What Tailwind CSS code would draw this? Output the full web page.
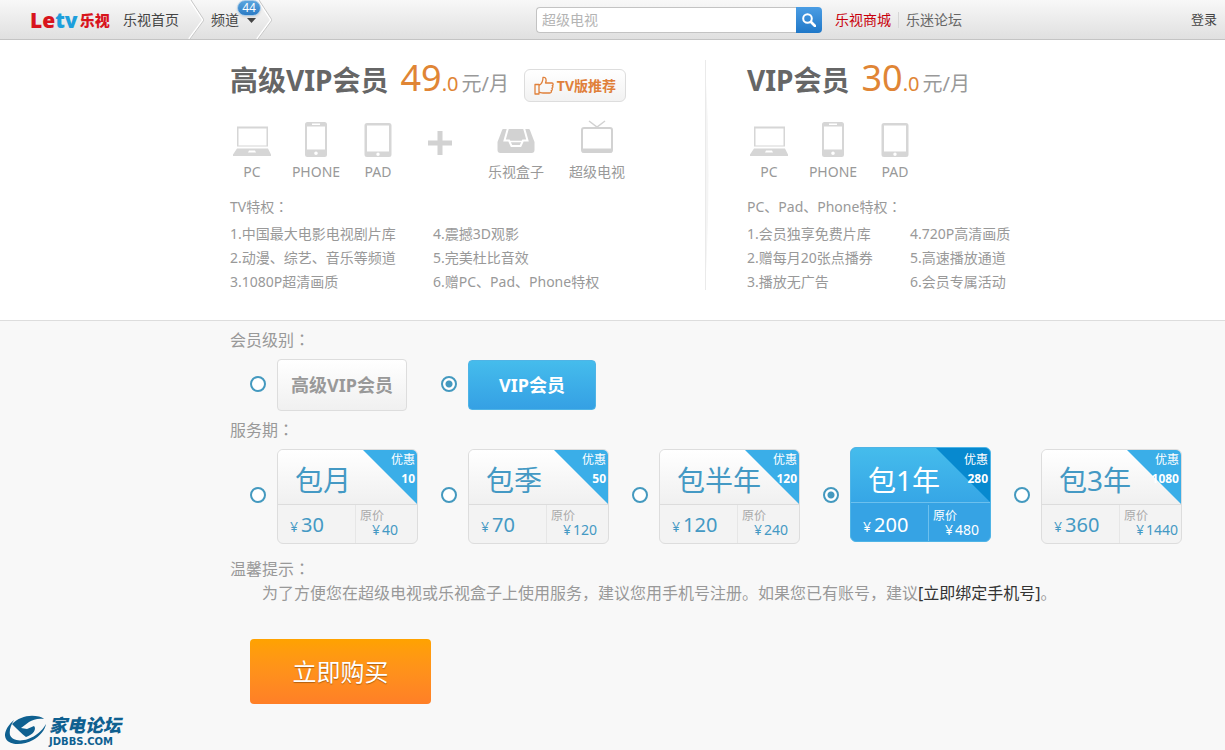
<!DOCTYPE html>
<html lang="zh-CN">
<head>
    <meta charset="UTF-8">
    <meta name="viewport" content="width=device-width, initial-scale=1.0">
    <script src="https://cdn.jsdelivr.net/npm/@tailwindcss/browser@4"></script>
    <title>乐视会员</title>
</head>
<body class="min-h-screen bg-[#f8f8f8] font-['Noto_Sans','Noto_Sans_CJK_SC',sans-serif] text-sm text-[#999]">
    <!-- Shared icons -->
    <svg class="hidden">
        <symbol id="icon-pc" viewBox="0 0 38 30">
            <path fill="#d6d6d6" fill-rule="evenodd" d="M4 0h31v20H4zM5.500 2v17h28V2zM4 22h31l3 6v1.500H0V28zM16 24l-1 2h8l-1-2z"/>
        </symbol>
        <symbol id="icon-phone" viewBox="0 0 24 36">
            <path fill="#d6d6d6" fill-rule="evenodd" d="M3.500 0h17a2.500 2.500 0 0 1 2.500 2.500v30a2.500 2.500 0 0 1-2.500 2.500h-17a2.500 2.500 0 0 1-2.500-2.500v-30A2.500 2.500 0 0 1 3.500 0zM3 4.500v23h18v-23zM8 1.500v1.500h8V1.500zM12 29.500a1.800 1.800 0 1 0 0 3.600a1.800 1.800 0 1 0 0-3.600z"/>
        </symbol>
        <symbol id="icon-pad" viewBox="0 0 28 36">
            <path fill="#d6d6d6" fill-rule="evenodd" d="M3 1h22a2.500 2.500 0 0 1 2.500 2.500v29a2.500 2.500 0 0 1-2.500 2.500H3a2.500 2.500 0 0 1-2.500-2.500v-29A2.500 2.500 0 0 1 3 1zM3 3.500v26h22v-26zM14 30.500a1.700 1.700 0 1 0 0 3.400a1.700 1.700 0 1 0 0-3.400z"/>
        </symbol>
    </svg>

    <!-- Header -->
    <header class="flex h-10 items-center border-b border-[#c4c4c4] bg-linear-to-b from-[#f8f8f8] to-[#e0e0e0] text-[#444]">
        <nav class="flex h-full w-[536px] shrink-0 items-center pl-[30px]">
            <a href="#" class="flex w-[93px] items-center leading-5 font-black text-[#d8141c]">
                <span class="text-[21px]">Le</span><span class="text-[21px] text-[#1d9fdc]">tv</span><span class="ml-0.5 text-[15px]">乐视</span>
            </a>
            <a href="#" class="w-[65px]">乐视首页</a>
            <svg class="h-[39px] w-4" viewBox="0 0 16 39" fill="none"><path d="M2 0l13 20L1 39" stroke="#fff" stroke-width="2"/><path d="M3 0l13 20L2 39" stroke="#c6c6c6"/></svg>
            <div class="relative ml-[7px] flex items-center">
                <a href="#">频道</a>
                <svg class="mt-px ml-2 h-[5px] w-[9px]" viewBox="0 0 9 5"><path d="M0 0h9L4.500 5z" fill="#444"/></svg>
                <span class="absolute -top-2.5 left-[26px] flex h-4 w-6 items-center justify-center rounded-full border border-[#a9cbe8] bg-linear-to-b from-[#5aa5de] to-[#2c7bc4] text-xs leading-3 text-white shadow">44</span>
            </div>
            <svg class="h-[39px] w-4" viewBox="0 0 16 39" fill="none"><path d="M2 0l13 20L1 39" stroke="#fff" stroke-width="2"/><path d="M3 0l13 20L2 39" stroke="#c6c6c6"/></svg>
        </nav>
        <form class="flex h-[26px]">
            <input type="text" aria-label="搜索" placeholder="超级电视" class="w-[260px] rounded-l-sm border border-r-0 border-[#c3c3c3] bg-white px-[5px] outline-none placeholder:text-[#b4b4b4]">
            <button type="button" aria-label="搜索" class="flex w-[26px] items-center justify-center rounded-r-sm bg-linear-to-b from-[#4a9de4] to-[#1f78c8]">
                <svg class="size-[14px]" viewBox="0 0 14 14" fill="none" stroke="#fff"><circle cx="5.500" cy="5.500" r="4.300" stroke-width="2"/><path d="M9 9l4 4" stroke-width="2.600" stroke-linecap="round"/></svg>
            </button>
        </form>
        <a href="#" class="ml-[13px] text-[#c8000b]">乐视商城</a>
        <span class="mx-[7px] h-4 w-px bg-[#d6d6d6]"></span>
        <a href="#" class="text-[#666]">乐迷论坛</a>
        <a href="#" class="mr-2 ml-auto text-[13px]">登录</a>
    </header>

    <!-- Plans -->
    <section class="flex border-b border-[#ddd] bg-white pt-5 pb-[26px] pl-[230px]">
        <div class="w-[475px] shrink-0">
            <div class="flex h-10">
                <div class="-mt-0.5 flex items-baseline">
                    <h2 class="text-[28px] leading-10 font-bold text-[#666]">高级VIP会员</h2>
                    <span class="ml-3 text-4xl leading-10 text-[#e08535]">49</span>
                    <span class="text-xl leading-10 text-[#e08535]">.0</span>
                    <span class="ml-[3px] text-xl leading-10">元/月</span>
                </div>
                <button type="button" class="mt-[9px] ml-[15px] flex h-[33px] w-[102px] items-center justify-center gap-[3px] rounded-md border border-[#ddd] bg-linear-to-b from-white to-[#f2f2f2] font-bold text-[#e0803a]">
                    <svg class="size-5" viewBox="0 0 20 20" fill="none" stroke="#e0803a" stroke-width="1.300" stroke-linejoin="round"><path d="M1 8.500h4V18H1zM5 9.500c2.500-1.500 4-4 4-8c3-.8 3.800 2 2.500 5.500H18c1.500 0 1.500 2.300.2 2.600c1 .6.900 2.300-.4 2.600c.9.700.6 2.200-.6 2.500c.6.900.1 2.300-1.500 2.300H9c-2 0-2.500-.8-4-.8"/></svg>
                    TV版推荐
                </button>
            </div>
            <ul class="mt-[22px] flex text-center leading-5">
                <li class="w-[44px]"><svg class="mx-auto h-9 w-[38px] pt-[3px]"><use href="#icon-pc"/></svg><p class="mt-1">PC</p></li>
                <li class="w-[84px]"><svg class="mx-auto h-9 w-6"><use href="#icon-phone"/></svg><p class="mt-1">PHONE</p></li>
                <li class="w-[40px]"><svg class="mx-auto h-9 w-7"><use href="#icon-pad"/></svg><p class="mt-1">PAD</p></li>
                <li class="w-[84px] pt-[9px]"><svg class="mx-auto size-6" viewBox="0 0 24 24"><path d="M9.500 0h5v9.500H24v5h-9.500V24h-5v-9.500H0v-5h9.500z" fill="#d2d2d2"/></svg></li>
                <li class="w-[68px]"><svg class="mx-auto h-9 w-[38px]" viewBox="0 0 38 36" fill="none"><path fill="#d2d2d2" d="M6.500 7h25c.8 0 1.200.4 1.500 1.200L37.500 20v8c0 2-1 3-3 3h-31c-2 0-3-1-3-3v-8L5 8.200C5.300 7.400 5.700 7 6.500 7z"/><path stroke="#fff" stroke-width="2" d="M11 6L7.500 18.500H12l2.500 5.500h9l2.500-5.500h4.500L27 6"/><path stroke="#fff" stroke-width="1.500" d="M12.500 19.500h13"/></svg><p class="mt-1">乐视盒子</p></li>
                <li class="w-[94px]"><svg class="mx-auto h-9 w-8 overflow-visible" viewBox="0 0 32 36" fill="none" stroke="#d2d2d2"><path d="M8 -1l8 6l8-6" stroke-width="1.500"/><rect x="1" y="6" width="30" height="24" rx="2" stroke-width="2"/><path d="M1 28.500h30" stroke-width="4"/></svg><p class="mt-1">超级电视</p></li>
            </ul>
            <h3 class="mt-[13px] h-6 leading-6">TV特权<span lang="zh-TW" class="font-[Noto_Sans_CJK_TC,sans-serif] leading-none">：</span></h3>
            <div class="mt-[3px] flex leading-6">
                <ul class="w-[203px]">
                    <li>1.中国最大电影电视剧片库</li>
                    <li>2.动漫、综艺、音乐等频道</li>
                    <li>3.1080P超清画质</li>
                </ul>
                <ul>
                    <li>4.震撼3D观影</li>
                    <li>5.完美杜比音效</li>
                    <li>6.赠PC、Pad、Phone特权</li>
                </ul>
            </div>
        </div>
        <svg class="h-[230px] w-1.5 shrink-0" viewBox="0 0 6 230"><path d="M0 0Q7 115 0 230z" fill="#f4f4f4"/><path d="M.5 0v230" stroke="#eaeaea"/></svg>
        <div class="ml-9">
            <div class="flex h-10">
                <div class="-mt-0.5 flex items-baseline">
                    <h2 class="text-[28px] leading-10 font-bold text-[#666]">VIP会员</h2>
                    <span class="ml-3 text-4xl leading-10 text-[#e08535]">30</span>
                    <span class="text-xl leading-10 text-[#e08535]">.0</span>
                    <span class="ml-[3px] text-xl leading-10">元/月</span>
                </div>
            </div>
            <ul class="mt-[22px] flex text-center leading-5">
                <li class="w-[44px]"><svg class="mx-auto h-9 w-[38px] pt-[3px]"><use href="#icon-pc"/></svg><p class="mt-1">PC</p></li>
                <li class="w-[84px]"><svg class="mx-auto h-9 w-6"><use href="#icon-phone"/></svg><p class="mt-1">PHONE</p></li>
                <li class="w-[40px]"><svg class="mx-auto h-9 w-7"><use href="#icon-pad"/></svg><p class="mt-1">PAD</p></li>
            </ul>
            <h3 class="mt-[13px] h-6 leading-6">PC、Pad、Phone特权<span lang="zh-TW" class="font-[Noto_Sans_CJK_TC,sans-serif] leading-none">：</span></h3>
            <div class="mt-[3px] flex leading-6">
                <ul class="w-[163px]">
                    <li>1.会员独享免费片库</li>
                    <li>2.赠每月20张点播券</li>
                    <li>3.播放无广告</li>
                </ul>
                <ul>
                    <li>4.720P高清画质</li>
                    <li>5.高速播放通道</li>
                    <li>6.会员专属活动</li>
                </ul>
            </div>
        </div>
    </section>

    <!-- Order form -->
    <form class="pt-[7px] pl-[230px] text-base">
        <fieldset>
            <legend class="h-6 leading-6">会员级别<span lang="zh-TW" class="font-[Noto_Sans_CJK_TC,sans-serif] leading-none">：</span></legend>
            <div class="mt-[7px] flex gap-[34px] pl-5">
                <label class="group flex items-center gap-[11px]">
                    <input type="radio" name="level" class="mb-0.5 size-4 appearance-none rounded-full border-[2px] border-[#4499bf] bg-white checked:bg-[radial-gradient(circle,#4499bf_3px,white_4px)]">
                    <span class="flex h-[52px] w-[130px] items-center justify-center rounded border border-[#ddd] bg-linear-to-b from-white to-[#f0f0f0] text-lg font-bold group-has-checked:border-[#4fb4e6] group-has-checked:from-[#45bcec] group-has-checked:to-[#35a0e4] group-has-checked:text-white">高级VIP会员</span>
                </label>
                <label class="group flex items-center gap-[11px]">
                    <input type="radio" name="level" checked class="mb-0.5 size-4 appearance-none rounded-full border-[2px] border-[#4499bf] bg-white checked:bg-[radial-gradient(circle,#4499bf_3px,white_4px)]">
                    <span class="flex h-[50px] w-[128px] items-center justify-center rounded border border-[#ddd] bg-linear-to-b from-white to-[#f0f0f0] text-lg font-bold group-has-checked:border-[#4fb4e6] group-has-checked:from-[#45bcec] group-has-checked:to-[#35a0e4] group-has-checked:text-white">VIP会员</span>
                </label>
            </div>
        </fieldset>

        <fieldset class="mt-[7px]">
            <legend class="h-6 leading-6">服务期<span lang="zh-TW" class="font-[Noto_Sans_CJK_TC,sans-serif] leading-none">：</span></legend>
            <div class="mt-[7px] flex gap-[23px] pl-5 text-[#4499c4]">
                <label class="group flex items-center gap-[11px]">
                    <input type="radio" name="period" class="mb-[3px] size-4 appearance-none rounded-full border-[2px] border-[#4499bf] bg-white checked:bg-[radial-gradient(circle,#4499bf_3px,white_4px)]">
                    <span class="relative block h-[95px] w-[141px] overflow-hidden rounded-md border border-[#ddd] bg-[#f3f3f3] group-has-checked:-top-0.5 group-has-checked:border-[#4fb4e6] group-has-checked:bg-[#36a3e4] group-has-checked:text-white">
                        <svg class="absolute top-0 right-0 size-[54px] text-[#3aaee8] group-has-checked:text-[#0789cf]" viewBox="0 0 54 54"><path d="M0 0h54v54z" fill="currentColor"/></svg>
                        <span class="absolute top-0 right-0.5 z-10 text-right text-xs leading-[19px] text-white group-has-checked:top-0.5">优惠<b class="block">10</b></span>
                        <span class="flex h-[55px] items-center border-b border-[#dcdcdc] bg-linear-to-b from-white to-[#f0f0f0] pt-1.5 pl-[17px] text-[28px] leading-9 group-has-checked:border-[#6cc0ee] group-has-checked:from-[#45bcec] group-has-checked:to-[#36a6e6] group-has-checked:pt-2.5">包月</span>
                        <span class="flex h-[38px] group-has-checked:pt-0.5">
                            <span class="flex w-[78px] items-baseline gap-[3px] border-r border-[#e6e6e6] pt-1.5 pl-3 text-sm leading-7 group-has-checked:border-[#6cc0ee]">¥<span class="text-xl leading-7">30</span></span>
                            <span class="pl-1 text-xs leading-[14px] text-[#aaa] group-has-checked:text-white"><span class="block pt-1">原价</span><span class="flex items-baseline gap-0.5 pl-3 text-sm leading-[14px] text-[#4499c4] group-has-checked:text-white">¥<span>40</span></span></span>
                        </span>
                    </span>
                </label>
                <label class="group flex items-center gap-[11px]">
                    <input type="radio" name="period" class="mb-[3px] size-4 appearance-none rounded-full border-[2px] border-[#4499bf] bg-white checked:bg-[radial-gradient(circle,#4499bf_3px,white_4px)]">
                    <span class="relative block h-[95px] w-[141px] overflow-hidden rounded-md border border-[#ddd] bg-[#f3f3f3] group-has-checked:-top-0.5 group-has-checked:border-[#4fb4e6] group-has-checked:bg-[#36a3e4] group-has-checked:text-white">
                        <svg class="absolute top-0 right-0 size-[54px] text-[#3aaee8] group-has-checked:text-[#0789cf]" viewBox="0 0 54 54"><path d="M0 0h54v54z" fill="currentColor"/></svg>
                        <span class="absolute top-0 right-0.5 z-10 text-right text-xs leading-[19px] text-white group-has-checked:top-0.5">优惠<b class="block">50</b></span>
                        <span class="flex h-[55px] items-center border-b border-[#dcdcdc] bg-linear-to-b from-white to-[#f0f0f0] pt-1.5 pl-[17px] text-[28px] leading-9 group-has-checked:border-[#6cc0ee] group-has-checked:from-[#45bcec] group-has-checked:to-[#36a6e6] group-has-checked:pt-2.5">包季</span>
                        <span class="flex h-[38px] group-has-checked:pt-0.5">
                            <span class="flex w-[78px] items-baseline gap-[3px] border-r border-[#e6e6e6] pt-1.5 pl-3 text-sm leading-7 group-has-checked:border-[#6cc0ee]">¥<span class="text-xl leading-7">70</span></span>
                            <span class="pl-1 text-xs leading-[14px] text-[#aaa] group-has-checked:text-white"><span class="block pt-1">原价</span><span class="flex items-baseline gap-0.5 pl-3 text-sm leading-[14px] text-[#4499c4] group-has-checked:text-white">¥<span>120</span></span></span>
                        </span>
                    </span>
                </label>
                <label class="group flex items-center gap-[11px]">
                    <input type="radio" name="period" class="mb-[3px] size-4 appearance-none rounded-full border-[2px] border-[#4499bf] bg-white checked:bg-[radial-gradient(circle,#4499bf_3px,white_4px)]">
                    <span class="relative block h-[95px] w-[141px] overflow-hidden rounded-md border border-[#ddd] bg-[#f3f3f3] group-has-checked:-top-0.5 group-has-checked:border-[#4fb4e6] group-has-checked:bg-[#36a3e4] group-has-checked:text-white">
                        <svg class="absolute top-0 right-0 size-[54px] text-[#3aaee8] group-has-checked:text-[#0789cf]" viewBox="0 0 54 54"><path d="M0 0h54v54z" fill="currentColor"/></svg>
                        <span class="absolute top-0 right-0.5 z-10 text-right text-xs leading-[19px] text-white group-has-checked:top-0.5">优惠<b class="block">120</b></span>
                        <span class="flex h-[55px] items-center border-b border-[#dcdcdc] bg-linear-to-b from-white to-[#f0f0f0] pt-1.5 pl-[17px] text-[28px] leading-9 group-has-checked:border-[#6cc0ee] group-has-checked:from-[#45bcec] group-has-checked:to-[#36a6e6] group-has-checked:pt-2.5">包半年</span>
                        <span class="flex h-[38px] group-has-checked:pt-0.5">
                            <span class="flex w-[78px] items-baseline gap-[3px] border-r border-[#e6e6e6] pt-1.5 pl-3 text-sm leading-7 group-has-checked:border-[#6cc0ee]">¥<span class="text-xl leading-7">120</span></span>
                            <span class="pl-1 text-xs leading-[14px] text-[#aaa] group-has-checked:text-white"><span class="block pt-1">原价</span><span class="flex items-baseline gap-0.5 pl-3 text-sm leading-[14px] text-[#4499c4] group-has-checked:text-white">¥<span>240</span></span></span>
                        </span>
                    </span>
                </label>
                <label class="group flex items-center gap-[11px]">
                    <input type="radio" name="period" checked class="mb-[3px] size-4 appearance-none rounded-full border-[2px] border-[#4499bf] bg-white checked:bg-[radial-gradient(circle,#4499bf_3px,white_4px)]">
                    <span class="relative block h-[95px] w-[141px] overflow-hidden rounded-md border border-[#ddd] bg-[#f3f3f3] group-has-checked:-top-0.5 group-has-checked:border-[#4fb4e6] group-has-checked:bg-[#36a3e4] group-has-checked:text-white">
                        <svg class="absolute top-0 right-0 size-[54px] text-[#3aaee8] group-has-checked:text-[#0789cf]" viewBox="0 0 54 54"><path d="M0 0h54v54z" fill="currentColor"/></svg>
                        <span class="absolute top-0 right-0.5 z-10 text-right text-xs leading-[19px] text-white group-has-checked:top-0.5">优惠<b class="block">280</b></span>
                        <span class="flex h-[55px] items-center border-b border-[#dcdcdc] bg-linear-to-b from-white to-[#f0f0f0] pt-1.5 pl-[17px] text-[28px] leading-9 group-has-checked:border-[#6cc0ee] group-has-checked:from-[#45bcec] group-has-checked:to-[#36a6e6] group-has-checked:pt-2.5">包1年</span>
                        <span class="flex h-[38px] group-has-checked:pt-0.5">
                            <span class="flex w-[78px] items-baseline gap-[3px] border-r border-[#e6e6e6] pt-1.5 pl-3 text-sm leading-7 group-has-checked:border-[#6cc0ee]">¥<span class="text-xl leading-7">200</span></span>
                            <span class="pl-1 text-xs leading-[14px] text-[#aaa] group-has-checked:text-white"><span class="block pt-1">原价</span><span class="flex items-baseline gap-0.5 pl-3 text-sm leading-[14px] text-[#4499c4] group-has-checked:text-white">¥<span>480</span></span></span>
                        </span>
                    </span>
                </label>
                <label class="group flex items-center gap-[11px]">
                    <input type="radio" name="period" class="mb-[3px] size-4 appearance-none rounded-full border-[2px] border-[#4499bf] bg-white checked:bg-[radial-gradient(circle,#4499bf_3px,white_4px)]">
                    <span class="relative block h-[95px] w-[141px] overflow-hidden rounded-md border border-[#ddd] bg-[#f3f3f3] group-has-checked:-top-0.5 group-has-checked:border-[#4fb4e6] group-has-checked:bg-[#36a3e4] group-has-checked:text-white">
                        <svg class="absolute top-0 right-0 size-[54px] text-[#3aaee8] group-has-checked:text-[#0789cf]" viewBox="0 0 54 54"><path d="M0 0h54v54z" fill="currentColor"/></svg>
                        <span class="absolute top-0 right-0.5 z-10 text-right text-xs leading-[19px] text-white group-has-checked:top-0.5">优惠<b class="block">1080</b></span>
                        <span class="flex h-[55px] items-center border-b border-[#dcdcdc] bg-linear-to-b from-white to-[#f0f0f0] pt-1.5 pl-[17px] text-[28px] leading-9 group-has-checked:border-[#6cc0ee] group-has-checked:from-[#45bcec] group-has-checked:to-[#36a6e6] group-has-checked:pt-2.5">包3年</span>
                        <span class="flex h-[38px] group-has-checked:pt-0.5">
                            <span class="flex w-[78px] items-baseline gap-[3px] border-r border-[#e6e6e6] pt-1.5 pl-3 text-sm leading-7 group-has-checked:border-[#6cc0ee]">¥<span class="text-xl leading-7">360</span></span>
                            <span class="pl-1 text-xs leading-[14px] text-[#aaa] group-has-checked:text-white"><span class="block pt-1">原价</span><span class="flex items-baseline gap-0.5 pl-3 text-sm leading-[14px] text-[#4499c4] group-has-checked:text-white">¥<span>1440</span></span></span>
                        </span>
                    </span>
                </label>
            </div>
        </fieldset>

        <div class="mt-[13px] leading-6">
            <h3 class="h-6">温馨提示<span lang="zh-TW" class="font-[Noto_Sans_CJK_TC,sans-serif] leading-none">：</span></h3>
            <p class="indent-8">为了方便您在超级电视或乐视盒子上使用服务，建议您用手机号注册。如果您已有账号，建议<a href="#" class="text-[#333]">[立即绑定手机号]</a>。</p>
        </div>
        <button type="button" class="mt-[34px] ml-5 h-[65px] w-[181px] rounded-sm bg-linear-to-b from-[#ffa200] to-[#ff7f27] text-2xl text-white text-shadow-[0_1px_1px_#b06010]">立即购买</button>
    </form>

    <!-- Forum mark -->
    <footer class="flex items-center gap-0.5 pt-[9px] pl-[5px] text-[#0f6090]">
        <svg class="h-8 w-[42px]" viewBox="0 0 42 32" fill="#0f6090">
            <path d="M7 10C14 3 24 0 34 2.500c2 .5 4 1.500 5 2.500c-6-1-11 .5-15 3l-8 6l6 1l7-3c3 3-1 9-8 11c-4-3-9-8-14-13z"/>
            <path d="M9 6C2 12-2 20 1 25c4 7 18 6 27 1c7-4 12-10 13-16c-4 7-10 12-18 15C14 28 7 26 5 21c-1-5 1-10 4-15z"/>
        </svg>
        <div>
            <p class="text-lg leading-6 font-black italic">家电论坛</p>
            <p class="font-[DejaVu_Sans,sans-serif] text-[10px] leading-[10px] font-bold">JDBBS.COM</p>
        </div>
    </footer>
</body>
</html>
